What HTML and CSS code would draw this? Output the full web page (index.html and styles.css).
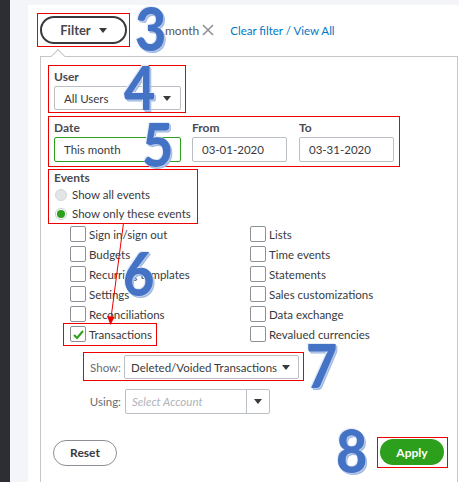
FILE: index.html
```html
<!DOCTYPE html>
<html lang="en">
<head>
    <meta charset="UTF-8">
    <meta name="viewport" content="width=device-width, initial-scale=1.0">
    <title>Audit Log Filter</title>
    <link rel="stylesheet" href="styles.css">
</head>
<body>
    <div class="rail"></div>
    <div class="gutter"></div>
    <main class="page">
        <div class="toolbar">
            <div class="mark filter-mark">
                <button class="filter-btn">Filter <span class="caret"></span></button>
            </div>
            <span class="chip">month
                <svg class="chip-x" width="12" height="12" viewBox="0 0 12 12"><path d="M1 1 L11 11 M11 1 L1 11" stroke="#8d9096" stroke-width="1.6" fill="none"/></svg>
            </span>
            <a class="clear-link" href="#">Clear filter / View All</a>
        </div>

        <div class="panel">
            <span class="notch"></span>

            <div class="mark section user-box">
                <div class="field-label">User</div>
                <div class="select user-select">All Users <span class="caret"></span></div>
            </div>

            <div class="mark section date-box">
                <div class="field date-field">
                    <div class="field-label">Date</div>
                    <div class="select date-select">This month</div>
                </div>
                <div class="field range-field">
                    <div class="field-label">From</div>
                    <div class="input">03-01-2020</div>
                </div>
                <div class="field range-field">
                    <div class="field-label">To</div>
                    <div class="input">03-31-2020</div>
                </div>
            </div>

            <div class="mark section events-box">
                <div class="field-label">Events</div>
                <div class="radio-row"><span class="radio disabled"></span>Show all events</div>
                <div class="radio-row"><span class="radio checked"></span>Show only these events</div>
            </div>

            <div class="event-grid">
                <div class="check-item"><span class="box"></span>Sign in/sign out</div>
                <div class="check-item"><span class="box"></span>Lists</div>
                <div class="check-item"><span class="box"></span>Budgets</div>
                <div class="check-item"><span class="box"></span>Time events</div>
                <div class="check-item"><span class="box"></span>Recurring templates</div>
                <div class="check-item"><span class="box"></span>Statements</div>
                <div class="check-item"><span class="box"></span>Settings</div>
                <div class="check-item"><span class="box"></span>Sales customizations</div>
                <div class="check-item"><span class="box"></span>Reconciliations</div>
                <div class="check-item"><span class="box"></span>Data exchange</div>
                <div class="check-item marked"><span class="box"><svg width="13" height="13" viewBox="0 0 13 13"><path d="M2 7 L5 10 L11 3" stroke="#2ca01c" stroke-width="2" fill="none"/></svg></span>Transactions</div>
                <div class="check-item"><span class="box"></span>Revalued currencies</div>
            </div>

            <div class="mark option-row show-row">
                <span class="option-label">Show:</span>
                <div class="select show-select"><span>Deleted/Voided Transactions</span> <span class="caret"></span></div>
            </div>

            <div class="option-row using-row">
                <span class="option-label">Using:</span>
                <div class="select using-select">
                    <span class="placeholder">Select Account</span>
                    <span class="drop"><span class="caret"></span></span>
                </div>
            </div>

            <div class="actions">
                <button class="btn-reset">Reset</button>
                <div class="mark apply-mark">
                    <button class="btn-apply">Apply</button>
                </div>
            </div>
        </div>
    </main>

    <div class="num n3">3</div>
    <div class="num n4">4</div>
    <div class="num n5">5</div>
    <div class="num n6">6</div>
    <div class="num n7">7</div>
    <div class="num n8">8</div>

    <svg class="arrow" width="459" height="482" viewBox="0 0 459 482">
        <line x1="123.5" y1="223" x2="111" y2="318" stroke="#e00" stroke-width="1"/>
        <path d="M107 316 L110.5 325 L114.5 317 Z" fill="#e00"/>
    </svg>
</body>
</html>
```

FILE: styles.css
```css
* {
    box-sizing: border-box;
}
body {
    margin: 0;
    width: 459px;
    height: 482px;
    overflow: hidden;
    display: flex;
    position: relative;
    font-family: Lato, "Open Sans", sans-serif;
    font-size: 11.5px;
    color: #393a3d;
    white-space: nowrap;
}
.rail {
    width: 10px;
    flex: none;
    background-color: #2d2e33;
}
.gutter {
    width: 18px;
    flex: none;
    background-color: #f4f5f8;
}
.page {
    flex: 1;
    background-color: #fff;
    border-top: 5px solid #f4f5f8;
    padding: 8px 0 0 9px;
}
.mark {
    border: 1px solid #e00;
}
.caret {
    display: inline-block;
    flex: none;
    width: 0;
    height: 0;
    border-left: 4px solid transparent;
    border-right: 4px solid transparent;
    border-top: 5px solid #393a3d;
}

/* toolbar */
.toolbar {
    display: flex;
    align-items: center;
    height: 34px;
}
.filter-mark {
    padding: 2px;
}
.filter-btn {
    width: 87px;
    height: 28px;
    border: 2px solid #393a3d;
    border-radius: 14px;
    background: #fff;
    font-family: inherit;
    font-size: 13px;
    font-weight: bold;
    color: #46474c;
    display: flex;
    align-items: center;
    justify-content: center;
    gap: 8px;
    padding: 0;
}
.chip {
    margin-left: 35px;
    display: flex;
    align-items: center;
    gap: 3px;
    font-size: 12px;
    color: #55565b;
}
.clear-link {
    margin-left: 16px;
    color: #0077c5;
    text-decoration: none;
    font-size: 11.5px;
}

/* panel */
.panel {
    position: relative;
    margin: 9px 0 0 3px;
    width: 418px;
    height: 440px;
    border: 1px solid #c6c6c6;
    padding: 8px 7px 0 7px;
}
.notch {
    position: absolute;
    left: 12px;
    top: -6px;
    width: 10px;
    height: 10px;
    background: #fff;
    border-left: 1px solid #c6c6c6;
    border-top: 1px solid #c6c6c6;
    transform: rotate(45deg);
}
.section {
    padding: 4px 4px 2px 5px;
}
.field-label {
    height: 14px;
    line-height: 14px;
    margin-bottom: 2px;
    font-weight: bold;
    font-size: 12px;
    color: #4a4b50;
}
.select, .input {
    display: flex;
    align-items: center;
    border: 1px solid #babec5;
    border-radius: 2px;
    padding: 0 9px;
    color: #393a3d;
    background: #fff;
}
.user-box {
    width: 138px;
}
.user-select {
    width: 127px;
    height: 24px;
    justify-content: space-between;
}
.date-box {
    margin-top: 3px;
    width: 352px;
    display: flex;
    gap: 11px;
    padding-bottom: 4px;
}
.date-field {
    width: 127px;
}
.range-field {
    width: 95px;
}
.range-field + .range-field {
    margin-left: 1px;
}
.date-select, .input {
    height: 25px;
}
.date-select {
    border-color: #2ca01c;
}
.events-box {
    margin-top: 2px;
    width: 150px;
    padding: 1px 5px 0 5px;
}
.events-box .field-label {
    margin-bottom: 0;
}
.radio-row {
    height: 19px;
    display: flex;
    align-items: center;
    gap: 5px;
}
.radio {
    flex: none;
    margin-left: 1px;
    width: 12px;
    height: 12px;
    border-radius: 50%;
    border: 1px solid #c9ccd1;
    background: #fff;
    display: flex;
    align-items: center;
    justify-content: center;
}
.radio.disabled {
    background: #e3e4e6;
    border-color: #d4d6da;
}
.radio.checked::after {
    content: "";
    width: 8px;
    height: 8px;
    border-radius: 50%;
    background: #2ca01c;
}

/* events checklist */
.event-grid {
    margin-left: 22px;
    display: grid;
    grid-template-columns: 180px 180px;
    grid-auto-rows: 20px;
}
.check-item {
    display: flex;
    align-items: center;
    gap: 3px;
    position: relative;
    justify-self: start;
}
.box {
    flex: none;
    width: 16px;
    height: 16px;
    border: 1px solid #8d9096;
    border-radius: 2px;
    background: #fff;
    display: flex;
    align-items: center;
    justify-content: center;
}
.check-item.marked::after {
    content: "";
    position: absolute;
    top: -1px;
    bottom: -2px;
    left: -7px;
    right: -5px;
    border: 1px solid #e00;
}

/* show / using */
.option-row {
    display: flex;
    align-items: center;
    margin-left: 35px;
}
.option-label {
    width: 37px;
    text-align: right;
    color: #6b6c72;
}
.show-row {
    margin-top: 8px;
    width: 221px;
    padding: 2px 4px 1px 0;
    gap: 3px;
}
.show-select {
    width: 175px;
    height: 24px;
    justify-content: space-between;
    padding: 0 8px 0 6px;
}
.using-row {
    margin-top: 7px;
    border: 1px solid transparent;
    gap: 4px;
}
.using-select {
    width: 145px;
    height: 25px;
    padding: 0 0 0 6px;
    justify-content: space-between;
}
.placeholder {
    font-style: italic;
    color: #b0b3b9;
}
.drop {
    width: 23px;
    height: 100%;
    border-left: 1px solid #babec5;
    display: flex;
    align-items: center;
    justify-content: center;
}

/* actions */
.actions {
    margin-top: 22px;
    display: flex;
    align-items: center;
    justify-content: space-between;
    padding: 0 2px 0 5px;
}
.btn-reset {
    width: 64px;
    height: 26px;
    border: 1px solid #8d9096;
    border-radius: 13px;
    background: #fff;
    font-family: inherit;
    font-size: 12px;
    font-weight: bold;
    color: #393a3d;
}
.apply-mark {
    padding: 1px 3px 2px 2px;
}
.btn-apply {
    display: block;
    width: 64px;
    height: 26px;
    border: none;
    border-radius: 13px;
    background: #2ca01c;
    font-family: inherit;
    font-size: 12px;
    font-weight: bold;
    color: #fff;
}

/* annotations */
.num {
    position: absolute;
    font-family: Lato, sans-serif;
    font-weight: 900;
    font-size: 60px;
    line-height: 1;
    color: #4472c4;
    text-shadow: -1px -1px 0 #e3eaf7, 1px 1px 0 #b9cbea, 2px 2px 0 #9fb7e3;
    transform: scaleX(0.9);
    transform-origin: left top;
}
.n3 { left: 135px; top: -2px; }
.n4 { left: 124px; top: 57px; }
.n5 { left: 142px; top: 114px; }
.n6 { left: 123px; top: 243px; }
.n7 { left: 306px; top: 335px; }
.n8 { left: 336px; top: 420px; }
.arrow {
    position: absolute;
    left: 0;
    top: 0;
    pointer-events: none;
}
```
